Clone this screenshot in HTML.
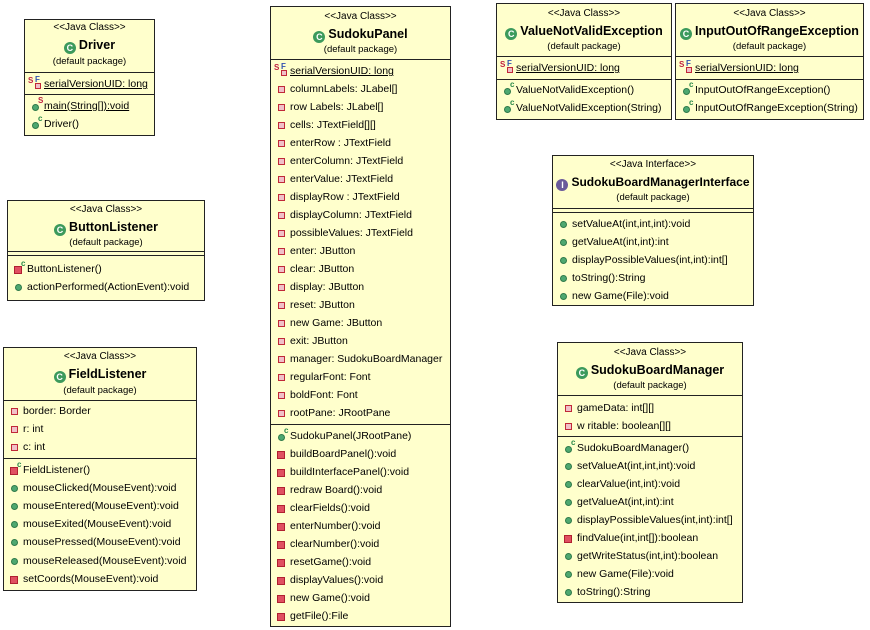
<!DOCTYPE html>
<html><head><meta charset="utf-8"><style>
body{margin:0;width:870px;height:630px;background:#fff;position:relative;overflow:hidden;font-family:"Liberation Sans",Arial,sans-serif;color:#000}
.b{position:absolute;background:#ffffcc;border:1px solid #222;box-sizing:border-box}
.l{position:absolute;left:0;right:0;height:16px;line-height:16px;white-space:nowrap}
.c{text-align:center}
.st{font-size:10px}
.nm{font-size:12.5px;font-weight:bold}
.pk{font-size:9.5px}
.r{font-size:10.5px;padding-left:19px}
.s{position:absolute;left:0;right:0;border-top:1px solid #222;height:0}
.ci{display:inline-block;width:12px;height:12px;border-radius:50%;background:#3c9a5c;color:#fff;font-size:9px;font-weight:bold;line-height:12px;text-align:center;vertical-align:-2px;margin-right:3px}
.ii{background:#6a5a9a}
.pu{position:absolute;left:7px;top:5px;width:7px;height:7px;border-radius:50%;background:#4ea870;border:0.5px solid #2f7a4a;box-sizing:border-box}
.pv{position:absolute;left:7px;top:5px;width:7px;height:7px;background:#f0c0c8;border:1.5px solid #c02838;box-sizing:border-box}
.pvb{position:absolute;left:6px;top:5px;width:8px;height:8px;background:#e05060;border:1px solid #b02030;box-sizing:border-box}
.sup{position:absolute;font-size:8px;font-weight:bold;top:-1px;left:13px;line-height:8px}
.sS{color:#c02040}.sC{color:#2a8a4a}.sF{color:#3050b0}
.u{text-decoration:underline}
</style></head><body>

<div class="b" style="left:24px;top:19px;width:131px;height:117px">
<div class="l c st" style="top:0">&lt;&lt;Java Class&gt;&gt;</div>
<div class="l c nm" style="top:17px"><span class="ci">C</span>Driver</div>
<div class="l c pk" style="top:34px">(default package)</div>
<div class="s" style="top:52px"></div>
<div class="l r" style="top:56px"><span class="pv" style="left:10px;top:7px;width:6px;height:6px"></span><span class="sup sS" style="left:3px;top:1px">S</span><span class="sup sF" style="left:10px;top:0">F</span><span class="u">serialVersionUID: long</span></div>
<div class="s" style="top:74px"></div>
<div class="l r" style="top:78px"><span class="pu" style="top:6px"></span><span class="sup sS">S</span><span class="u">main(String[]):void</span></div>
<div class="l r" style="top:96px"><span class="pu" style="top:6px"></span><span class="sup sC">c</span>Driver()</div>
</div>

<div class="b" style="left:7px;top:200px;width:198px;height:101px">
<div class="l c st" style="top:1px">&lt;&lt;Java Class&gt;&gt;</div>
<div class="l c nm" style="top:18px"><span class="ci">C</span>ButtonListener</div>
<div class="l c pk" style="top:34px">(default package)</div>
<div class="s" style="top:50px"></div>
<div class="s" style="top:54px"></div>
<div class="l r" style="top:60px"><span class="pvb"></span><span class="sup sC">c</span>ButtonListener()</div>
<div class="l r" style="top:78px"><span class="pu"></span>actionPerformed(ActionEvent):void</div>
</div>

<div class="b" style="left:3px;top:347px;width:194px;height:244px">
<div class="l c st" style="top:1px">&lt;&lt;Java Class&gt;&gt;</div>
<div class="l c nm" style="top:18px"><span class="ci">C</span>FieldListener</div>
<div class="l c pk" style="top:35px">(default package)</div>
<div class="s" style="top:52px"></div>
<div class="l r" style="top:55px"><span class="pv"></span>border: Border</div>
<div class="l r" style="top:73px"><span class="pv"></span>r: int</div>
<div class="l r" style="top:91px"><span class="pv"></span>c: int</div>
<div class="s" style="top:110px"></div>
<div class="l r" style="top:114px"><span class="pvb"></span><span class="sup sC">c</span>FieldListener()</div>
<div class="l r" style="top:132px"><span class="pu"></span>mouseClicked(MouseEvent):void</div>
<div class="l r" style="top:150px"><span class="pu"></span>mouseEntered(MouseEvent):void</div>
<div class="l r" style="top:168px"><span class="pu"></span>mouseExited(MouseEvent):void</div>
<div class="l r" style="top:186px"><span class="pu"></span>mousePressed(MouseEvent):void</div>
<div class="l r" style="top:205px"><span class="pu"></span>mouseReleased(MouseEvent):void</div>
<div class="l r" style="top:223px"><span class="pvb"></span>setCoords(MouseEvent):void</div>
</div>

<div class="b" style="left:270px;top:6px;width:181px;height:621px">
<div class="l c st" style="top:2px">&lt;&lt;Java Class&gt;&gt;</div>
<div class="l c nm" style="top:19px"><span class="ci">C</span>SudokuPanel</div>
<div class="l c pk" style="top:35px">(default package)</div>
<div class="s" style="top:52px"></div>
<div class="l r" style="top:56px"><span class="pv" style="left:10px;top:7px;width:6px;height:6px"></span><span class="sup sS" style="left:3px;top:1px">S</span><span class="sup sF" style="left:10px;top:0">F</span><span class="u">serialVersionUID: long</span></div>
<div class="l r" style="top:74px"><span class="pv"></span>columnLabels: JLabel[]</div>
<div class="l r" style="top:92px"><span class="pv"></span>row Labels: JLabel[]</div>
<div class="l r" style="top:110px"><span class="pv"></span>cells: JTextField[][]</div>
<div class="l r" style="top:128px"><span class="pv"></span>enterRow : JTextField</div>
<div class="l r" style="top:146px"><span class="pv"></span>enterColumn: JTextField</div>
<div class="l r" style="top:164px"><span class="pv"></span>enterValue: JTextField</div>
<div class="l r" style="top:182px"><span class="pv"></span>displayRow : JTextField</div>
<div class="l r" style="top:200px"><span class="pv"></span>displayColumn: JTextField</div>
<div class="l r" style="top:218px"><span class="pv"></span>possibleValues: JTextField</div>
<div class="l r" style="top:236px"><span class="pv"></span>enter: JButton</div>
<div class="l r" style="top:254px"><span class="pv"></span>clear: JButton</div>
<div class="l r" style="top:272px"><span class="pv"></span>display: JButton</div>
<div class="l r" style="top:290px"><span class="pv"></span>reset: JButton</div>
<div class="l r" style="top:308px"><span class="pv"></span>new Game: JButton</div>
<div class="l r" style="top:326px"><span class="pv"></span>exit: JButton</div>
<div class="l r" style="top:344px"><span class="pv"></span>manager: SudokuBoardManager</div>
<div class="l r" style="top:362px"><span class="pv"></span>regularFont: Font</div>
<div class="l r" style="top:380px"><span class="pv"></span>boldFont: Font</div>
<div class="l r" style="top:398px"><span class="pv"></span>rootPane: JRootPane</div>
<div class="s" style="top:417px"></div>
<div class="l r" style="top:421px"><span class="pu" style="top:6px"></span><span class="sup sC">c</span>SudokuPanel(JRootPane)</div>
<div class="l r" style="top:439px"><span class="pvb"></span>buildBoardPanel():void</div>
<div class="l r" style="top:457px"><span class="pvb"></span>buildInterfacePanel():void</div>
<div class="l r" style="top:475px"><span class="pvb"></span>redraw Board():void</div>
<div class="l r" style="top:493px"><span class="pvb"></span>clearFields():void</div>
<div class="l r" style="top:511px"><span class="pvb"></span>enterNumber():void</div>
<div class="l r" style="top:529px"><span class="pvb"></span>clearNumber():void</div>
<div class="l r" style="top:547px"><span class="pvb"></span>resetGame():void</div>
<div class="l r" style="top:565px"><span class="pvb"></span>displayValues():void</div>
<div class="l r" style="top:583px"><span class="pvb"></span>new Game():void</div>
<div class="l r" style="top:601px"><span class="pvb"></span>getFile():File</div>
</div>

<div class="b" style="left:496px;top:3px;width:176px;height:117px">
<div class="l c st" style="top:2px">&lt;&lt;Java Class&gt;&gt;</div>
<div class="l c nm" style="top:19px"><span class="ci">C</span>ValueNotValidException</div>
<div class="l c pk" style="top:35px">(default package)</div>
<div class="s" style="top:52px"></div>
<div class="l r" style="top:56px"><span class="pv" style="left:10px;top:7px;width:6px;height:6px"></span><span class="sup sS" style="left:3px;top:1px">S</span><span class="sup sF" style="left:10px;top:0">F</span><span class="u">serialVersionUID: long</span></div>
<div class="s" style="top:75px"></div>
<div class="l r" style="top:78px"><span class="pu" style="top:6px"></span><span class="sup sC">c</span>ValueNotValidException()</div>
<div class="l r" style="top:96px"><span class="pu" style="top:6px"></span><span class="sup sC">c</span>ValueNotValidException(String)</div>
</div>

<div class="b" style="left:675px;top:3px;width:189px;height:117px">
<div class="l c st" style="top:2px">&lt;&lt;Java Class&gt;&gt;</div>
<div class="l c nm" style="top:19px"><span class="ci">C</span>InputOutOfRangeException</div>
<div class="l c pk" style="top:35px">(default package)</div>
<div class="s" style="top:52px"></div>
<div class="l r" style="top:56px"><span class="pv" style="left:10px;top:7px;width:6px;height:6px"></span><span class="sup sS" style="left:3px;top:1px">S</span><span class="sup sF" style="left:10px;top:0">F</span><span class="u">serialVersionUID: long</span></div>
<div class="s" style="top:75px"></div>
<div class="l r" style="top:78px"><span class="pu" style="top:6px"></span><span class="sup sC">c</span>InputOutOfRangeException()</div>
<div class="l r" style="top:96px"><span class="pu" style="top:6px"></span><span class="sup sC">c</span>InputOutOfRangeException(String)</div>
</div>

<div class="b" style="left:552px;top:155px;width:202px;height:151px">
<div class="l c st" style="top:1px">&lt;&lt;Java Interface&gt;&gt;</div>
<div class="l c nm" style="top:18px;font-size:12px"><span class="ci ii">I</span>SudokuBoardManagerInterface</div>
<div class="l c pk" style="top:34px">(default package)</div>
<div class="s" style="top:52px"></div>
<div class="s" style="top:56px"></div>
<div class="l r" style="top:60px"><span class="pu"></span>setValueAt(int,int,int):void</div>
<div class="l r" style="top:78px"><span class="pu"></span>getValueAt(int,int):int</div>
<div class="l r" style="top:96px"><span class="pu"></span>displayPossibleValues(int,int):int[]</div>
<div class="l r" style="top:114px"><span class="pu"></span>toString():String</div>
<div class="l r" style="top:132px"><span class="pu"></span>new Game(File):void</div>
</div>

<div class="b" style="left:557px;top:342px;width:186px;height:261px">
<div class="l c st" style="top:2px">&lt;&lt;Java Class&gt;&gt;</div>
<div class="l c nm" style="top:19px"><span class="ci">C</span>SudokuBoardManager</div>
<div class="l c pk" style="top:35px">(default package)</div>
<div class="s" style="top:52px"></div>
<div class="l r" style="top:57px"><span class="pv"></span>gameData: int[][]</div>
<div class="l r" style="top:75px"><span class="pv"></span>w ritable: boolean[][]</div>
<div class="s" style="top:93px"></div>
<div class="l r" style="top:97px"><span class="pu" style="top:6px"></span><span class="sup sC">c</span>SudokuBoardManager()</div>
<div class="l r" style="top:115px"><span class="pu"></span>setValueAt(int,int,int):void</div>
<div class="l r" style="top:133px"><span class="pu"></span>clearValue(int,int):void</div>
<div class="l r" style="top:151px"><span class="pu"></span>getValueAt(int,int):int</div>
<div class="l r" style="top:169px"><span class="pu"></span>displayPossibleValues(int,int):int[]</div>
<div class="l r" style="top:187px"><span class="pvb"></span>findValue(int,int[]):boolean</div>
<div class="l r" style="top:205px"><span class="pu"></span>getWriteStatus(int,int):boolean</div>
<div class="l r" style="top:223px"><span class="pu"></span>new Game(File):void</div>
<div class="l r" style="top:241px"><span class="pu"></span>toString():String</div>
</div>

</body></html>
